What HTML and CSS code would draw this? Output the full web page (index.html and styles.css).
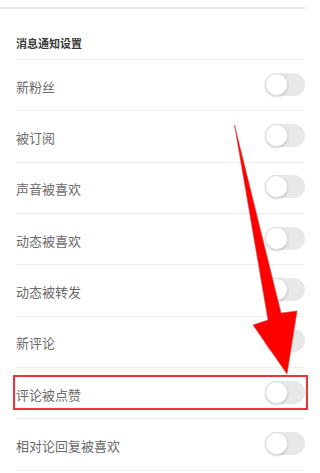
FILE: index.html
```html
<!DOCTYPE html>
<html lang="zh-CN">
  <head>
    <meta charset="UTF-8" />
    <meta name="viewport" content="width=device-width, initial-scale=1.0" />
    <title>消息通知设置</title>
    <link rel="stylesheet" href="styles.css">
  </head>
  <body>
    <div class="topbar"></div>
    <div class="settings">
      <div class="heading">消息通知设置</div>
      <div class="row"><span>新粉丝</span><span class="switch"></span></div>
      <div class="row"><span>被订阅</span><span class="switch"></span></div>
      <div class="row"><span>声音被喜欢</span><span class="switch"></span></div>
      <div class="row"><span>动态被喜欢</span><span class="switch"></span></div>
      <div class="row"><span>动态被转发</span><span class="switch"></span></div>
      <div class="row"><span>新评论</span><span class="switch"></span></div>
      <div class="row marked"><span>评论被点赞</span><span class="switch"></span></div>
      <div class="row"><span>相对论回复被喜欢</span><span class="switch"></span></div>
    </div>
    <!-- annotation arrow -->
    <svg class="arrow" width="320" height="473" viewBox="0 0 320 473">
      <polygon
        points="234.5,125 281,313 297,311 287,374 253,325 268,320"
        fill="#ff0000"
        stroke="#c44"
        stroke-width="0.6"
        stroke-linejoin="round"
      />
    </svg>
  </body>
</html>
```

FILE: styles.css
```css
body {
  margin: 0;
  width: 320px;
  height: 473px;
  overflow: hidden;
  background-color: #ffffff;
  font-family: "Noto Sans CJK SC", "Noto Sans", sans-serif;
  position: relative;
}
.topbar {
  height: 7px;
  width: 305px;
  border-bottom: 2px solid #e3e3e3;
}
.settings {
  padding: 0 16px;
}
.heading {
  height: 51px;
  box-sizing: border-box;
  padding-top: 17px;
  display: flex;
  align-items: center;
  font-size: 11px;
  font-weight: bold;
  color: #3a3a3a;
  border-bottom: 1px solid #eeeeee;
}
.row {
  height: 51.33px;
  box-sizing: border-box;
  display: flex;
  justify-content: space-between;
  align-items: center;
  padding-top: 2px;
  font-size: 13px;
  color: #6b6b6b;
  border-bottom: 1px solid #eeeeee;
  position: relative;
}
.switch {
  width: 40px;
  height: 23px;
  margin-right: -1px;
  margin-top: -4px;
  border-radius: 12px;
  background-color: #e8e8e8;
  position: relative;
}
.switch::before {
  content: "";
  position: absolute;
  left: 0;
  top: 0;
  width: 21px;
  height: 21px;
  border-radius: 50%;
  background-color: #ffffff;
  border: 1px solid #dcdcdc;
  box-shadow: 0 1px 2px rgba(0, 0, 0, 0.15);
}
.marked::after {
  content: "";
  position: absolute;
  left: -3px;
  right: -4px;
  top: 7px;
  bottom: 8px;
  border: 2px solid #e8343a;
  box-shadow: inset 0 0 1px rgba(0, 0, 0, 0.4);
}
.arrow {
  position: absolute;
  left: 0;
  top: 0;
}
```
